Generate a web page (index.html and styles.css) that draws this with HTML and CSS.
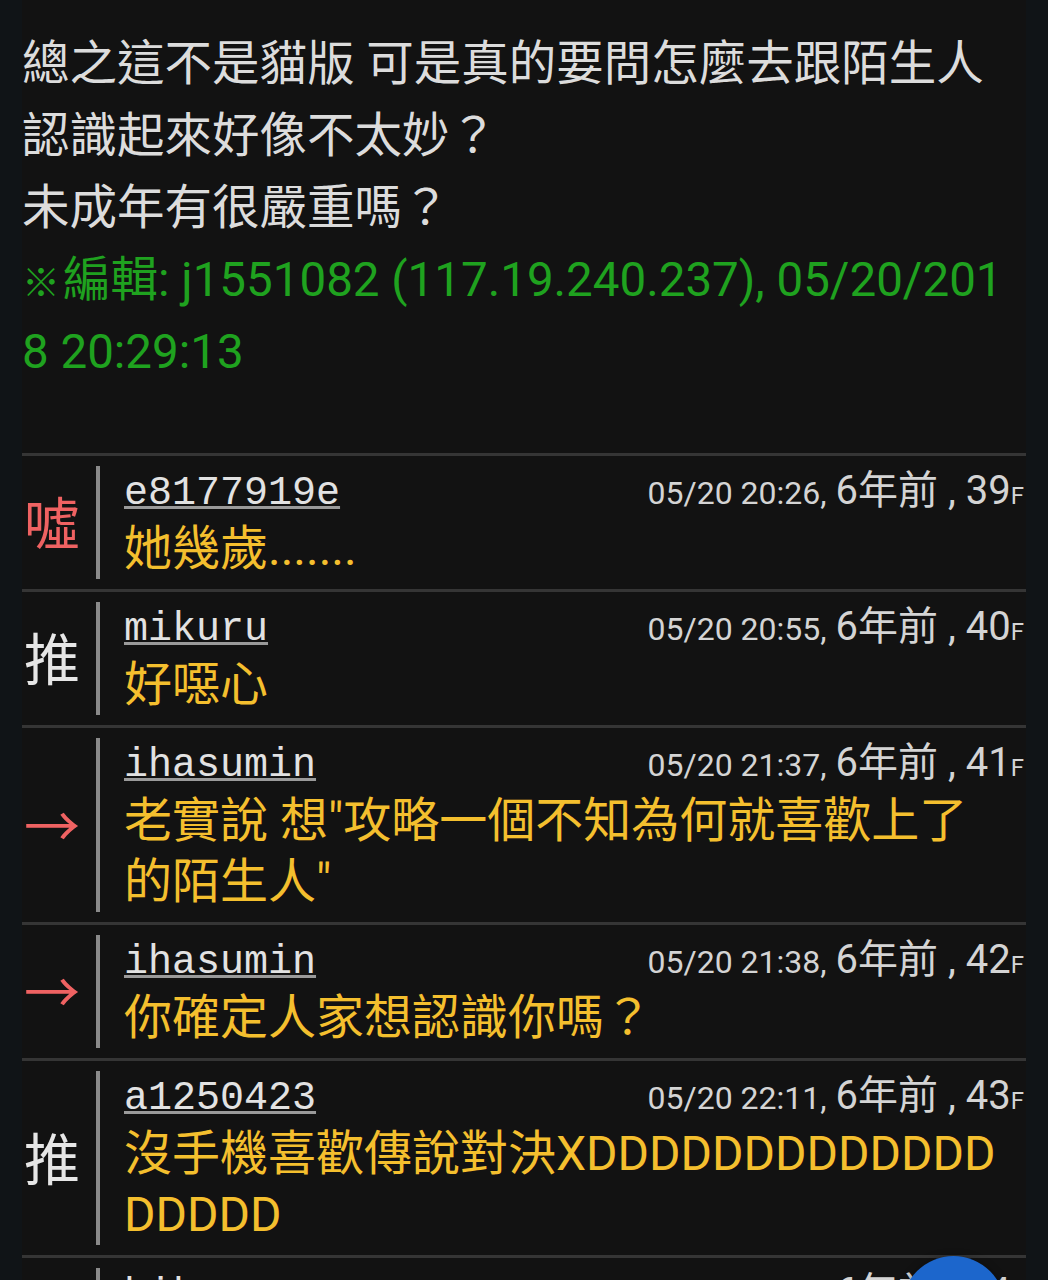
FILE: index.html
```html
<!DOCTYPE html>
<html lang="zh-Hant">
<head>
<meta charset="utf-8">
<title>PTT</title>
<link rel="stylesheet" href="styles.css">
</head>
<body>
<div class="page">
  <div class="article">
    <p>總之這不是貓版 可是真的要問怎麼去跟陌生人認識起來好像不太妙？</p>
    <p>未成年有很嚴重嗎？</p>
    <p class="edit"><span class="mark">※</span>編輯: j1551082 (117.19.240.237), 05/20/2018 20:29:13</p>
  </div>

  <div class="push">
    <div class="tag boo">噓</div>
    <div class="body">
      <div class="head">
        <span class="user">e8177919e</span>
        <span class="meta"><span class="date">05/20 20:26,</span><span class="ago">6年前 , 39</span><span class="f">F</span></span>
      </div>
      <div class="text">她幾歲.......</div>
    </div>
  </div>

  <div class="push">
    <div class="tag">推</div>
    <div class="body">
      <div class="head">
        <span class="user">mikuru</span>
        <span class="meta"><span class="date">05/20 20:55,</span><span class="ago">6年前 , 40</span><span class="f">F</span></span>
      </div>
      <div class="text">好噁心</div>
    </div>
  </div>

  <div class="push">
    <div class="tag arrow">→</div>
    <div class="body">
      <div class="head">
        <span class="user">ihasumin</span>
        <span class="meta"><span class="date">05/20 21:37,</span><span class="ago">6年前 , 41</span><span class="f">F</span></span>
      </div>
      <div class="text">老實說 想"攻略一個不知為何就喜歡上了的陌生人"</div>
    </div>
  </div>

  <div class="push">
    <div class="tag arrow">→</div>
    <div class="body">
      <div class="head">
        <span class="user">ihasumin</span>
        <span class="meta"><span class="date">05/20 21:38,</span><span class="ago">6年前 , 42</span><span class="f">F</span></span>
      </div>
      <div class="text">你確定人家想認識你嗎？</div>
    </div>
  </div>

  <div class="push">
    <div class="tag">推</div>
    <div class="body">
      <div class="head">
        <span class="user">a1250423</span>
        <span class="meta"><span class="date">05/20 22:11,</span><span class="ago">6年前 , 43</span><span class="f">F</span></span>
      </div>
      <div class="text">沒手機喜歡傳說對決XDDDDDDDDDDDDDDDDDD</div>
    </div>
  </div>

  <div class="push">
    <div class="tag">推</div>
    <div class="body">
      <div class="head">
        <span class="user">hikaru</span>
        <span class="meta"><span class="date">05/20 22:15,</span><span class="ago">6年前 , 44</span><span class="f">F</span></span>
      </div>
      <div class="text">可以先從朋友開始</div>
    </div>
  </div>
</div>
<div class="fab"></div>
</body>
</html>
```
FILE: styles.css
```css
html, body {
  margin: 0;
  padding: 0;
  background: #101417;
}
body {
  overflow: hidden;
  height: 1280px;
}
.page {
  margin: 0 22px;
  background: #121212;
  min-height: 1280px;
  font-family: Roboto, "Noto Sans CJK TC", sans-serif;
}
.article {
  padding: 28px 0 65px 0;
  font-size: 47.5px;
  line-height: 72px;
  color: #dcdcdc;
}
.article p {
  margin: 0;
}
.edit {
  color: #1fa21f;
  word-break: break-all;
}
.mark {
  font-family: "Noto Sans CJK TC", sans-serif;
  font-size: 38px;
  line-height: 1;
  margin-right: 3px;
}
.push {
  display: flex;
  border-top: 3px solid #353535;
  padding: 10px 0;
}
.tag {
  width: 74px;
  flex: none;
  display: flex;
  align-items: center;
  padding-left: 2px;
  padding-bottom: 6px;
  box-sizing: border-box;
  font-family: "Noto Sans CJK TC", sans-serif;
  font-size: 56px;
  color: #e6e6e6;
}
.tag.boo,
.tag.arrow {
  color: #ef6262;
}
.body {
  flex: 1;
  min-width: 0;
  border-left: 4px solid #8a8a8a;
  padding-left: 24px;
}
.head {
  display: flex;
  justify-content: space-between;
  align-items: baseline;
  height: 52px;
  line-height: 50px;
  padding-right: 2px;
}
.user {
  font-family: "Liberation Mono", monospace;
  font-size: 40px;
  color: #e2e2e2;
  text-decoration: underline;
  text-decoration-color: #9a9a9a;
  text-decoration-thickness: 3px;
  text-underline-offset: 2px;
}
.meta {
  color: #d4d4d4;
  white-space: nowrap;
}
.meta .date {
  font-size: 32px;
}
.meta .ago {
  font-size: 40px;
  margin-left: 9px;
}
.meta .f {
  font-size: 24px;
}
.text {
  font-size: 48px;
  line-height: 61px;
  color: #f4bf2e;
  word-break: break-all;
  padding-right: 16px;
}
.fab {
  position: fixed;
  left: 902px;
  top: 1256px;
  width: 103px;
  height: 103px;
  border-radius: 50%;
  background: #1c66cc;
  box-shadow: 0 2px 8px rgba(0, 0, 0, 0.5);
}
```
